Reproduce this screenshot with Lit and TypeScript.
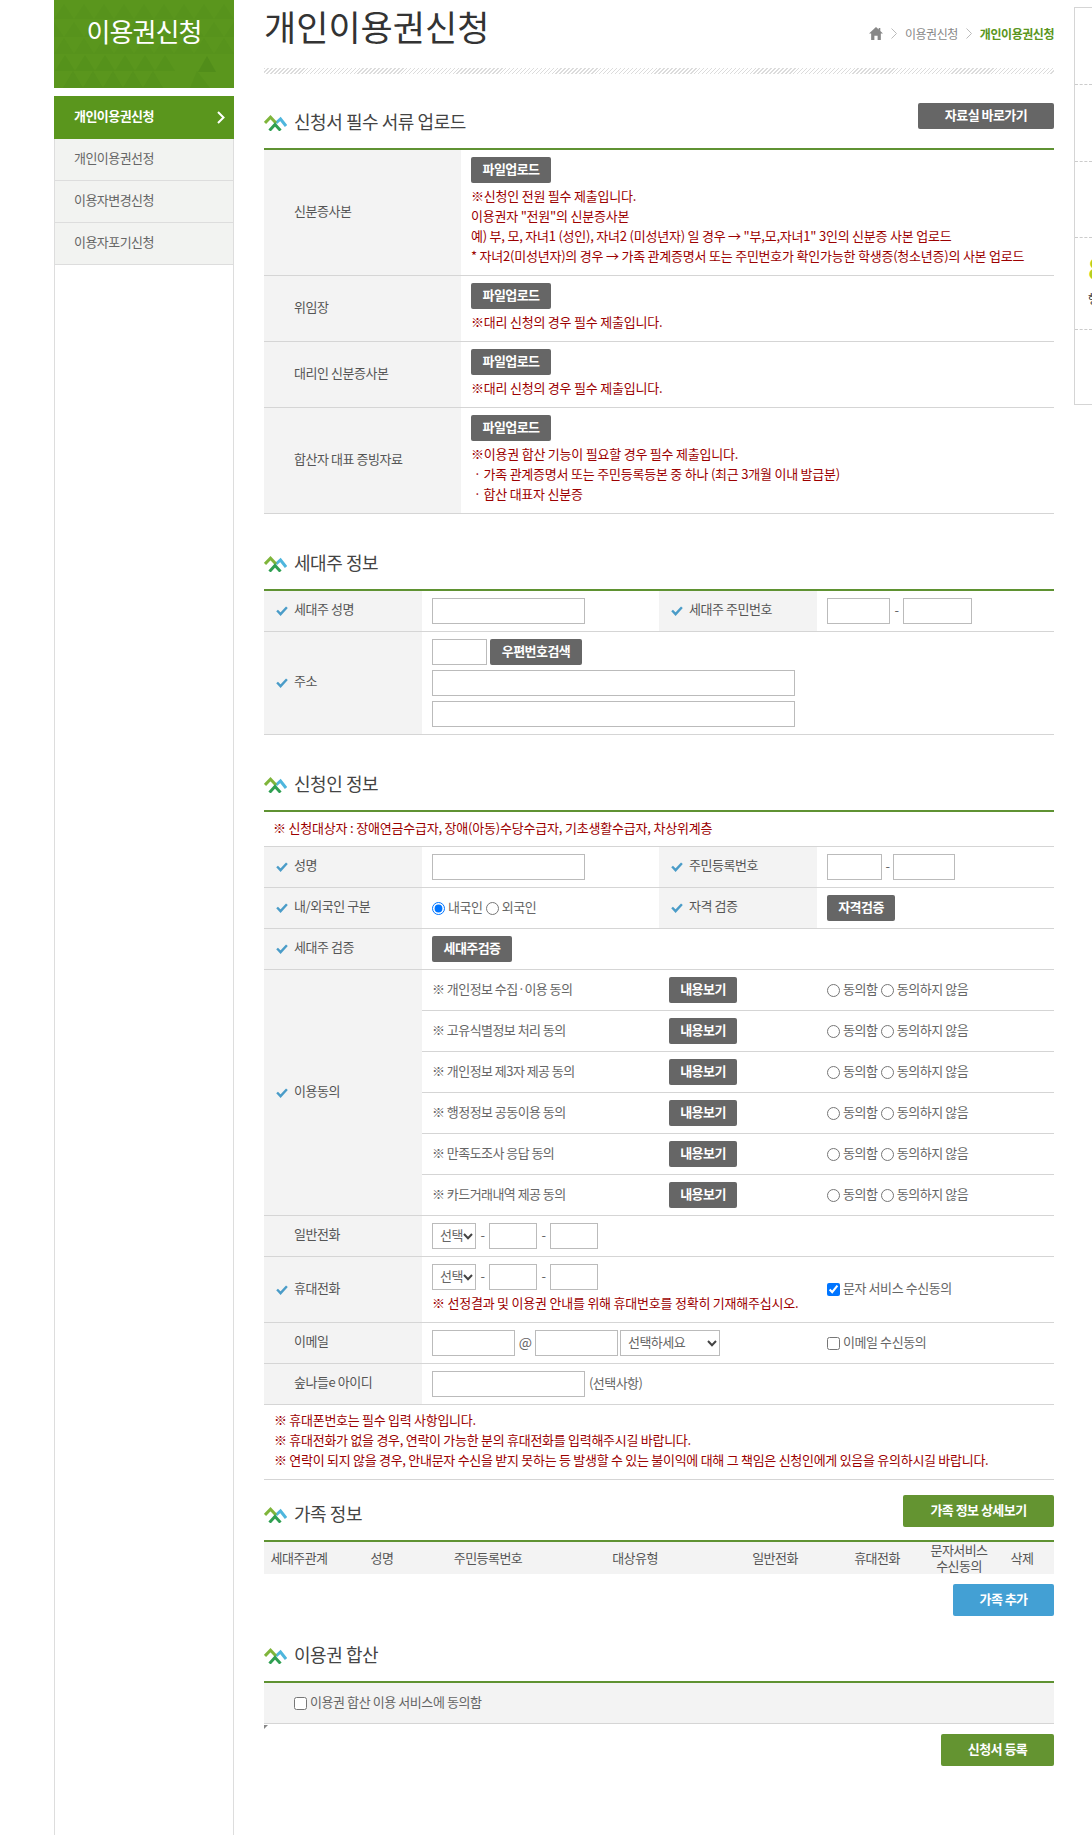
import { LitElement, html, css, svg } from "lit";
import { customElement } from "lit/decorators.js";

const headIcon = html`<svg class="hicon" viewBox="0 0 23 16" width="23" height="16" fill="none" stroke-width="3">
  <polyline points="12,8 16.5,4 22,11" stroke="#4fb6dd"></polyline>
  <polyline points="1,8 6.5,2.2 12,8" stroke="#7fb53b"></polyline>
  <polyline points="5.5,15.5 11,9.5 16.5,15.5" stroke="#2f9f52"></polyline>
</svg>`;

const check = html`<svg class="chk" viewBox="0 0 11 9" width="12" height="10" fill="none" stroke="#4a9cc8" stroke-width="2.2"><polyline points="1,4 4.2,7.4 10,1"></polyline></svg>`;

const head = (t: string, extra: unknown = "") => html`<div class="head">${headIcon}<h3>${t}</h3>${extra}</div>`;

const tris = (y: number, h: number, w: number, o: number, off = 0, max = 190) => {
  const pts: unknown[] = [];
  for (let x = off; x < max; x += w) {
    pts.push(svg`<polygon points="${x},${y + h} ${x + w / 2},${y} ${x + w},${y + h}" fill="#1f5f10" opacity="${o}"></polygon>`);
  }
  return pts;
};

const agreeItems = [
  "※ 개인정보 수집·이용 동의",
  "※ 고유식별정보 처리 동의",
  "※ 개인정보 제3자 제공 동의",
  "※ 행정정보 공동이용 동의",
  "※ 만족도조사 응답 동의",
  "※ 카드거래내역 제공 동의",
];

const famCols = ["세대주관계", "성명", "주민등록번호", "대상유형", "일반전화", "휴대전화"];

@customElement("app-root")
export class AppRoot extends LitElement {
  static styles = css`
    :host {
      display: flex;
      width: 1092px;
      height: 1835px;
      overflow: hidden;
      background: #fff;
      font-family: "Noto Sans CJK KR", "Noto Sans", sans-serif;
      font-size: 13px;
      letter-spacing: -0.55px;
      color: #555;
      padding-left: 54px;
      box-sizing: border-box;
    }
    * { box-sizing: border-box; }
    .side { width: 180px; flex: none; display: flex; flex-direction: column; }
    .banner { height: 88px; background: #5a961d; position: relative; color: #fff; font-size: 26px; line-height: 62px; text-align: center; letter-spacing: -0.9px; overflow: hidden; flex: none; }
    .banner svg { position: absolute; left: 0; top: 0; }
    .banner span { position: relative; }
    .menu { flex: 1; margin-top: 8px; border-left: 1px solid #ddd; border-right: 1px solid #ddd; }
    .mi { height: 42px; background: #f2f3f1; border-bottom: 1px solid #ddd; padding: 0 0 4px 19px; display: flex; align-items: center; color: #666; }
    .mi.on { height: 43px; background: #5a961d; color: #fff; font-weight: 700; justify-content: space-between; padding-right: 9px; margin: 0 -1px; padding-left: 20px; border: 0; }
    .mi.on svg { margin-top: 4px; }
    .main { width: 790px; flex: none; margin-left: 30px; display: flex; flex-direction: column; }
    .top { height: 68px; display: flex; justify-content: space-between; }
    h2 { margin: 0; font-size: 35px; font-weight: 400; color: #333; line-height: 52px; letter-spacing: 0; }
    .crumb { display: flex; align-items: center; height: 66px; font-size: 12px; color: #888; gap: 8px; letter-spacing: -0.45px; }
    .crumb b { color: #5a961d; font-weight: 700; }
    .hatch { height: 6px; flex: none; background: repeating-linear-gradient(135deg, #dcdcdc 0 1px, #fff 1px 2.8px); }
    .head { height: 46px; display: flex; align-items: flex-start; flex: none; position: relative; }
    .hicon { margin-top: 13px; margin-right: 7px; flex: none; }
    h3 { margin: 0; font-size: 18px; font-weight: 400; color: #444; line-height: 38px; letter-spacing: -0.45px; }
    .push { margin-left: auto; margin-top: 1px; }
    .s1 { margin-top: 28px; }
    .s2 { margin-top: 29px; }
    .s3 { margin-top: 29px; }
    .s4 { margin-top: 14px; }
    .s5 { margin-top: 19px; }
    .tbl { border-top: 2px solid #5f9232; flex: none; }
    .btn { display: inline-flex; align-items: center; justify-content: center; height: 26px; background: #666; color: #fff; border-radius: 2px; font-weight: 700; font-size: 13px; padding-bottom: 4px; flex: none; }
    .w80 { width: 80px; }
    .w68 { width: 68px; }
    .w92 { width: 92px; }
    .w135 { width: 136px; }
    .big { height: 32px; background: #649431; }
    .w150 { width: 151px; }
    .w100 { width: 101px; background: #43a0d4; }
    .w112 { width: 113px; }
    .end { align-self: flex-end; margin-top: 10px; }
    .urow { display: grid; grid-template-columns: 197px 1fr; border-bottom: 1px solid #d5d5d5; }
    .urow .th { padding-left: 30px; }
    .urow .cell { padding: 7px 0 0 10px; }
    .h126 { height: 126px; }
    .h66 { height: 66px; }
    .h106 { height: 106px; }
    .th { background: #f3f3f3; display: flex; align-items: center; padding: 0 0 5px 30px; color: #555; letter-spacing: -0.45px; }
    .th.c { padding-left: 12px; }
    .chk { margin-right: 6px; margin-top: 5px; flex: none; }
    .red { color: #9c0000; line-height: 20px; white-space: nowrap; letter-spacing: -0.22px; }
    .redlines { margin-top: 3px; }
    .row { display: grid; grid-template-columns: 158px 237px 158px 237px; height: 41px; border-bottom: 1px solid #d5d5d5; }
    .td { display: flex; align-items: center; padding-left: 10px; }
    .t { padding-bottom: 4px; color: #666; }
    .span2 { grid-column: span 2; }
    .span3 { grid-column: span 3; }
    .addr { height: 103px; }
    .addr .td { flex-direction: column; align-items: flex-start; gap: 5px; justify-content: center; }
    .inl { display: flex; align-items: center; }
    .g3 { gap: 3px; }
    input[type="text"] { height: 26px; border: 1px solid #bbb; background: #fff; padding: 0; margin: 0; flex: none; border-radius: 0; outline: none; }
    .i153 { width: 153px; }
    .i55 { width: 55px; }
    .i363 { width: 363px; }
    .i63 { width: 63px; }
    .i69 { width: 69px; }
    .i62 { width: 62px; }
    .i48 { width: 48px; }
    .i83 { width: 83px; }
    .dash { width: 11px; text-align: center; flex: none; padding-bottom: 3px; color: #666; }
    .dash2 { width: 13px; text-align: center; flex: none; padding-bottom: 3px; color: #666; }
    select {
      appearance: none;
      height: 26px;
      border: 1px solid #bbb;
      font: inherit;
      color: #666;
      margin: 0;
      flex: none;
      border-radius: 0;
      outline: none;
      letter-spacing: inherit;
      padding: 0 0 3px 7px;
      background: #fff url("data:image/svg+xml,%3Csvg xmlns='http://www.w3.org/2000/svg' width='10' height='7' viewBox='0 0 10 7'%3E%3Cpolyline points='1,1 5,5.2 9,1' fill='none' stroke='%23444' stroke-width='2'/%3E%3C/svg%3E") no-repeat right 2px center;
    }
    .s44 { width: 44px; }
    .s100 { width: 100px; }
    .notice { height: 35px; display: flex; align-items: center; padding: 0 0 3px 9px; border-bottom: 1px solid #d5d5d5; color: #9c0000; white-space: nowrap; letter-spacing: -0.2px; }
    .agree { height: 246px; }
    .agree .th { grid-column: 1; }
    .agree .inner { grid-column: 2 / 5; display: flex; flex-direction: column; }
    .ir { display: grid; grid-template-columns: 237px 158px 237px; height: 41px; border-bottom: 1px solid #d5d5d5; flex: none; }
    .ir:last-child { border-bottom: 0; height: 40px; }
    label { display: inline-flex; align-items: center; white-space: nowrap; color: #666; letter-spacing: -0.42px; }
    label span { padding-bottom: 4px; }
    input[type="radio"], input[type="checkbox"] { margin: 0 3px 0 0; width: 13px; height: 13px; flex: none; }
    .lab2 { margin-left: 3px; }
    .tall { height: 66px; }
    .tall .td1 { grid-column: span 2; flex-direction: column; align-items: flex-start; justify-content: flex-start; padding-top: 7px; gap: 3px; }
    .at { width: 20px; text-align: center; flex: none; color: #666; font-size: 14px; padding-bottom: 3px; }
    .gap2 { margin-left: 2px; }
    .opt { margin-left: 4px; color: #666; padding-bottom: 4px; }
    .notes { height: 75px; padding: 5px 0 0 10px; border-bottom: 1px solid #d5d5d5; flex: none; letter-spacing: -0.28px; }
    .fam { display: grid; grid-template-columns: 70px 96px 116px 178px 102px 102px 62px 64px; height: 32px; background: #f3f3f3; text-align: center; line-height: 16px; flex: none; color: #555; padding-bottom: 4px; }
    .fam div { display: flex; align-items: center; justify-content: center; }
    .agree2 { height: 41px; background: #f3f3f3; border-bottom: 1px solid #d5d5d5; display: flex; align-items: center; padding-left: 30px; flex: none; }
    .tick { width: 0; height: 0; border-top: 4px solid #888; border-right: 4px solid transparent; margin-top: 1px; flex: none; }
    .tail { margin-top: 5px; }
    .right { width: 18px; flex: none; margin-left: 20px; margin-top: 7px; height: 398px; border: 1px solid #d5d5d5; border-right: 0; overflow: hidden; display: flex; flex-direction: column; }
    .rs { flex: none; border-bottom: 1px dashed #ccc; }
    .r1 { height: 77px; }
    .r2 { height: 77px; }
    .r3 { height: 76px; }
    .r4 { height: 92px; padding-left: 13px; white-space: nowrap; color: #333; }
    .eight { color: #b5cf20; font-size: 30px; font-weight: 700; line-height: 30px; margin-top: 14px; }
    .small { font-size: 12px; line-height: 16px; margin-top: 9px; }
  `;

  private radio(name: string, text: string, cls = "", checked = false) {
    return html`<label class=${cls}><input type="radio" name=${name} ?checked=${checked} /><span>${text}</span></label>`;
  }

  private consentRow(t: string) {
    return html`<div class="ir">
      <div class="td"><span class="t">${t}</span></div>
      <div class="td"><span class="btn w68">내용보기</span></div>
      <div class="td">${this.radio(t, "동의함")}${this.radio(t, "동의하지 않음", "lab2")}</div>
    </div>`;
  }

  private phone() {
    return html`<select class="s44"><option>선택</option></select>
      <span class="dash2">-</span><input type="text" class="i48" />
      <span class="dash2">-</span><input type="text" class="i48" />`;
  }

  render() {
    return html`
      <aside class="side">
        <div class="banner">
          <svg width="180" height="88" viewBox="0 0 180 88">
            ${tris(4, 15, 20, 0.035)}${tris(22, 15, 20, 0.035, -10)}${tris(38, 16, 20, 0.045)}
            ${tris(55, 16, 20, 0.07, 1, 110)}${tris(71, 17, 20, 0.065, 9, 100)}
            <polygon points="136,88 143,71 156,88" fill="#1f5f10" opacity="0.07"></polygon>
            <polygon points="144,72 153,56 162,72" fill="#1f5f10" opacity="0.14"></polygon>
          </svg>
          <span>이용권신청</span>
        </div>
        <nav class="menu">
          <div class="mi on">개인이용권신청
            <svg width="8" height="13" viewBox="0 0 8 13" fill="none" stroke="#fff" stroke-width="2"><polyline points="1,1 6.5,6.5 1,12"></polyline></svg>
          </div>
          <div class="mi">개인이용권선정</div>
          <div class="mi">이용자변경신청</div>
          <div class="mi">이용자포기신청</div>
        </nav>
      </aside>

      <main class="main">
        <div class="top">
          <h2>개인이용권신청</h2>
          <div class="crumb">
            <svg width="14" height="13" viewBox="0 0 13 12" fill="#888"><path d="M6.5 0 0 6h2v6h3V8h3v4h3V6h2L10.5 3.6V1H9v1.2z"></path></svg>
            <svg width="6" height="11" viewBox="0 0 6 11" fill="none" stroke="#bbb"><polyline points="0.5,0.5 5.5,5.5 0.5,10.5"></polyline></svg>
            <span>이용권신청</span>
            <svg width="6" height="11" viewBox="0 0 6 11" fill="none" stroke="#bbb"><polyline points="0.5,0.5 5.5,5.5 0.5,10.5"></polyline></svg>
            <b>개인이용권신청</b>
          </div>
        </div>
        <div class="hatch"></div>

        <div class="s1">${head("신청서 필수 서류 업로드", html`<span class="btn w135 push">자료실 바로가기</span>`)}</div>
        <section class="tbl">
          <div class="urow h126">
            <div class="th">신분증사본</div>
            <div class="cell">
              <span class="btn w80">파일업로드</span>
              <div class="red redlines">
                ※신청인 전원 필수 제출입니다.<br />
                이용권자 "전원"의 신분증사본<br />
                예) 부, 모, 자녀1 (성인), 자녀2 (미성년자) 일 경우 → "부,모,자녀1" 3인의 신분증 사본 업로드<br />
                * 자녀2(미성년자)의 경우 → 가족 관계증명서 또는 주민번호가 확인가능한 학생증(청소년증)의 사본 업로드
              </div>
            </div>
          </div>
          <div class="urow h66">
            <div class="th">위임장</div>
            <div class="cell"><span class="btn w80">파일업로드</span><div class="red redlines">※대리 신청의 경우 필수 제출입니다.</div></div>
          </div>
          <div class="urow h66">
            <div class="th">대리인 신분증사본</div>
            <div class="cell"><span class="btn w80">파일업로드</span><div class="red redlines">※대리 신청의 경우 필수 제출입니다.</div></div>
          </div>
          <div class="urow h106">
            <div class="th">합산자 대표 증빙자료</div>
            <div class="cell">
              <span class="btn w80">파일업로드</span>
              <div class="red redlines">
                ※이용권 합산 기능이 필요할 경우 필수 제출입니다.<br />
                &nbsp;· 가족 관계증명서 또는 주민등록등본 중 하나 (최근 3개월 이내 발급분)<br />
                &nbsp;· 합산 대표자 신분증
              </div>
            </div>
          </div>
        </section>

        <div class="s2">${head("세대주 정보")}</div>
        <section class="tbl">
          <div class="row">
            <div class="th c">${check}세대주 성명</div>
            <div class="td"><input type="text" class="i153" /></div>
            <div class="th c">${check}세대주 주민번호</div>
            <div class="td"><input type="text" class="i63" /><span class="dash2">-</span><input type="text" class="i69" /></div>
          </div>
          <div class="row addr">
            <div class="th c">${check}주소</div>
            <div class="td span3">
              <div class="inl g3"><input type="text" class="i55" /><span class="btn w92">우편번호검색</span></div>
              <input type="text" class="i363" />
              <input type="text" class="i363" />
            </div>
          </div>
        </section>

        <div class="s3">${head("신청인 정보")}</div>
        <section class="tbl">
          <div class="notice">※ 신청대상자 : 장애연금수급자, 장애(아동)수당수급자, 기초생활수급자, 차상위계층</div>
          <div class="row">
            <div class="th c">${check}성명</div>
            <div class="td"><input type="text" class="i153" /></div>
            <div class="th c">${check}주민등록번호</div>
            <div class="td"><input type="text" class="i55" /><span class="dash">-</span><input type="text" class="i62" /></div>
          </div>
          <div class="row">
            <div class="th c">${check}내/외국인 구분</div>
            <div class="td">${this.radio("nat", "내국인", "", true)}${this.radio("nat", "외국인", "lab2")}</div>
            <div class="th c">${check}자격 검증</div>
            <div class="td"><span class="btn w68">자격검증</span></div>
          </div>
          <div class="row">
            <div class="th c">${check}세대주 검증</div>
            <div class="td span3"><span class="btn w80">세대주검증</span></div>
          </div>
          <div class="row agree">
            <div class="th c">${check}이용동의</div>
            <div class="inner">${agreeItems.map((t) => this.consentRow(t))}</div>
          </div>
          <div class="row">
            <div class="th">일반전화</div>
            <div class="td span3">${this.phone()}</div>
          </div>
          <div class="row tall">
            <div class="th c">${check}휴대전화</div>
            <div class="td td1">
              <div class="inl">${this.phone()}</div>
              <div class="red">※ 선정결과 및 이용권 안내를 위해 휴대번호를 정확히 기재해주십시오.</div>
            </div>
            <div class="td"><label><input type="checkbox" checked /><span>문자 서비스 수신동의</span></label></div>
          </div>
          <div class="row">
            <div class="th">이메일</div>
            <div class="td span2">
              <input type="text" class="i83" /><span class="at">@</span><input type="text" class="i83" />
              <select class="s100 gap2"><option>선택하세요</option></select>
            </div>
            <div class="td"><label><input type="checkbox" /><span>이메일 수신동의</span></label></div>
          </div>
          <div class="row">
            <div class="th">숲나들e 아이디</div>
            <div class="td span3"><input type="text" class="i153" /><span class="opt">(선택사항)</span></div>
          </div>
        </section>
        <div class="notes red">
          ※ 휴대폰번호는 필수 입력 사항입니다.<br />
          ※ 휴대전화가 없을 경우, 연락이 가능한 분의 휴대전화를 입력해주시길 바랍니다.<br />
          ※ 연락이 되지 않을 경우, 안내문자 수신을 받지 못하는 등 발생할 수 있는 불이익에 대해 그 책임은 신청인에게 있음을 유의하시길 바랍니다.
        </div>

        <div class="s4">${head("가족 정보", html`<span class="btn big w150 push">가족 정보 상세보기</span>`)}</div>
        <section class="tbl">
          <div class="fam">
            ${famCols.map((t) => html`<div>${t}</div>`)}
            <div>문자서비스<br />수신동의</div>
            <div>삭제</div>
          </div>
        </section>
        <span class="btn big w100 end">가족 추가</span>

        <div class="s5">${head("이용권 합산")}</div>
        <section class="tbl">
          <div class="agree2"><label><input type="checkbox" /><span>이용권 합산 이용 서비스에 동의함</span></label></div>
        </section>
        <div class="tick"></div>
        <span class="btn big w112 end tail">신청서 등록</span>
      </main>

      <aside class="right">
        <div class="rs r1"></div>
        <div class="rs r2"></div>
        <div class="rs r3"></div>
        <div class="rs r4"><div class="eight">8</div><div class="small">행복</div></div>
      </aside>
    `;
  }
}
